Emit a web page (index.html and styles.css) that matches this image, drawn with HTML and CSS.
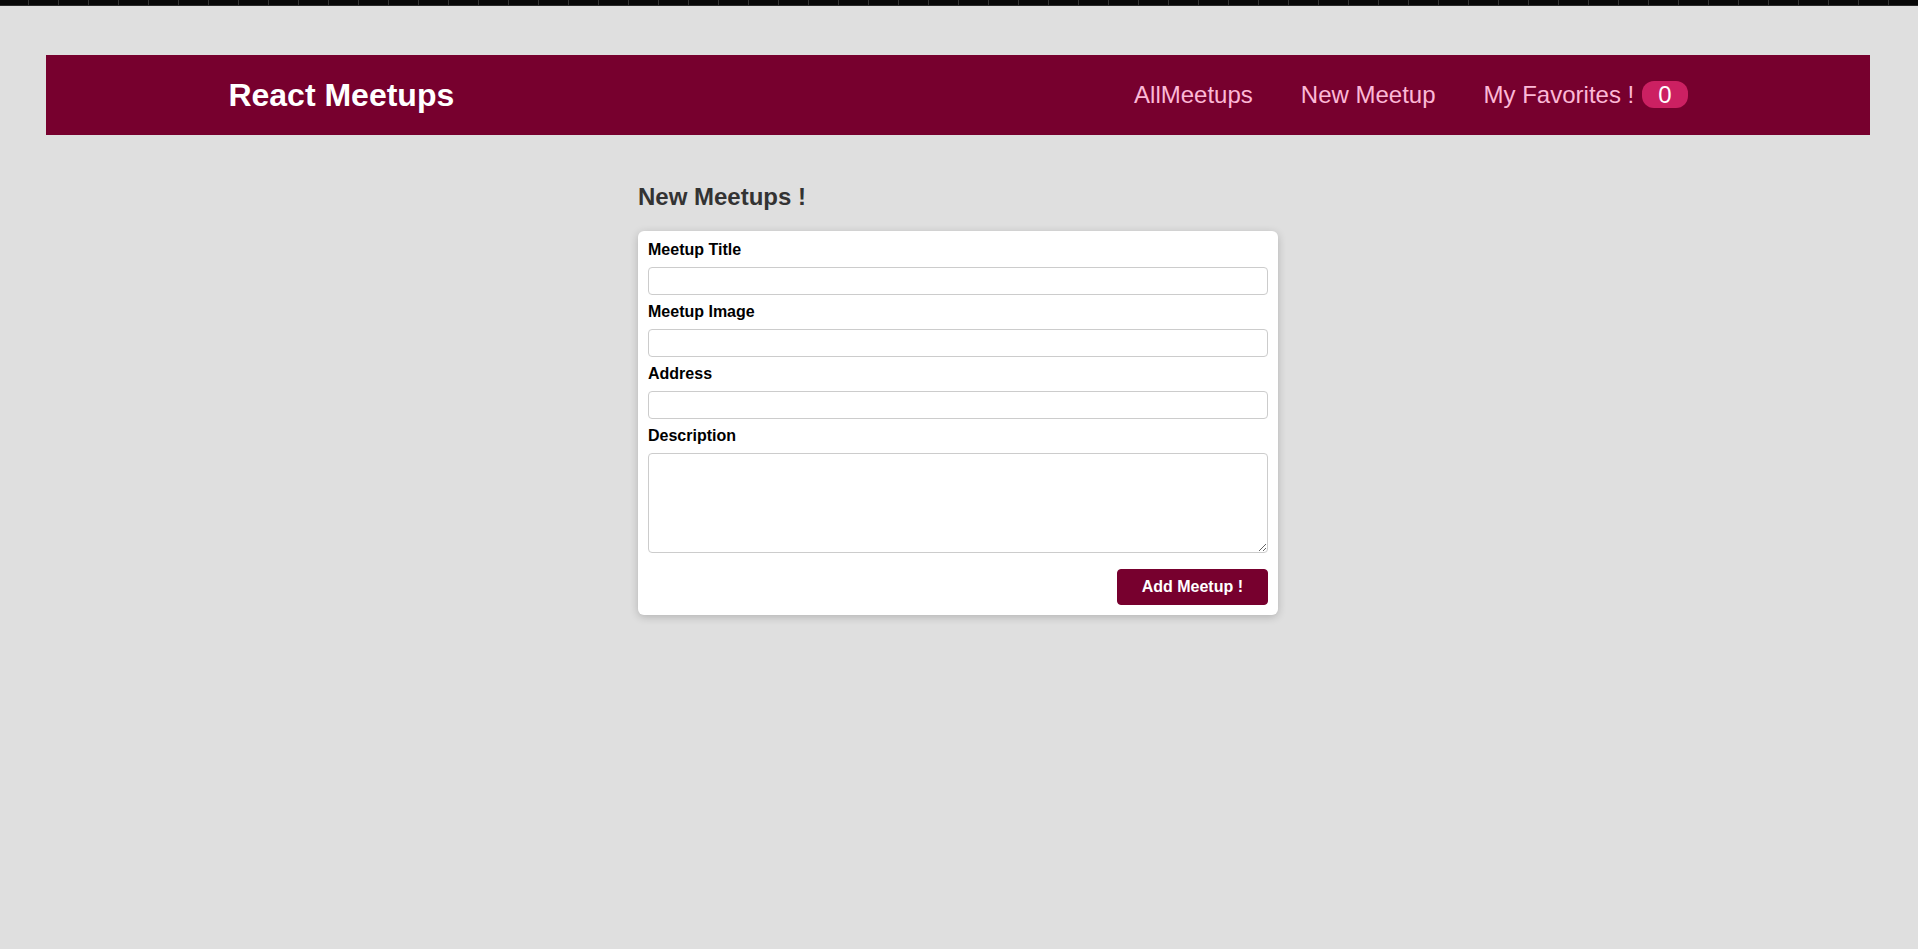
FILE: index.html
```html
<!DOCTYPE html>
<html lang="en">
<head>
<meta charset="utf-8">
<title>React Meetups</title>
<link rel="stylesheet" href="styles.css">
</head>
<body>
<div class="topbar"></div>
<div class="layout">
  <header class="header">
    <div class="logo">React Meetups</div>
    <nav>
      <ul class="nav-list">
        <li><a href="#">AllMeetups</a></li>
        <li><a href="#">New Meetup</a></li>
        <li><a href="#">My Favorites !<span class="badge">0</span></a></li>
      </ul>
    </nav>
  </header>
  <main class="main">
    <section>
      <h2 class="title">New Meetups !</h2>
      <div class="card">
        <form class="form">
          <div class="control">
            <label for="title">Meetup Title</label>
            <input type="text" id="title">
          </div>
          <div class="control">
            <label for="image">Meetup Image</label>
            <input type="url" id="image">
          </div>
          <div class="control">
            <label for="address">Address</label>
            <input type="text" id="address">
          </div>
          <div class="control">
            <label for="description">Description</label>
            <textarea id="description" rows="5"></textarea>
          </div>
          <div class="actions">
            <button type="button">Add Meetup !</button>
          </div>
        </form>
      </div>
    </section>
  </main>
</div>
</body>
</html>
```
FILE: styles.css
```css
* {
  box-sizing: border-box;
}

html, body {
  margin: 0;
  padding: 0;
}

body {
  font-family: "Liberation Sans", Arial, sans-serif;
  font-size: 16px;
  background-color: #dfdfdf;
  min-height: 949px;
}

.topbar {
  height: 6px;
  background:
    linear-gradient(to bottom, transparent 0 5px, #2b2b2b 5px 6px),
    repeating-linear-gradient(to right, #080808 0 28px, #333333 28px 29px, #080808 29px 30px);
}

.layout {
  margin: 0 48px 0 46px;
  padding-top: 49px;
}

.header {
  width: 100%;
  height: 80px;
  display: flex;
  align-items: center;
  justify-content: space-between;
  background-color: #77002e;
  padding: 0 10%;
}

.logo {
  font-size: 32px;
  color: #ffffff;
  font-weight: bold;
}

.nav-list {
  list-style: none;
  margin: 0;
  padding: 0;
  display: flex;
  align-items: baseline;
}

.nav-list li {
  margin-left: 48px;
}

.nav-list a {
  text-decoration: none;
  font-size: 24px;
  color: #fcb8d6;
}

.badge {
  background-color: #cc2062;
  color: #ffffff;
  border-radius: 12px;
  padding: 0 16px;
  margin-left: 8px;
}

.main {
  margin: 48px auto;
  width: 640px;
}

.title {
  font-size: 24px;
  font-weight: bold;
  color: #333333;
  margin: 20px 0;
}

.card {
  background-color: #ffffff;
  border-radius: 6px;
  box-shadow: 0 2px 8px rgba(0, 0, 0, 0.2);
}

.form {
  padding: 10px;
}

.control {
  margin-bottom: 8px;
}

.control label {
  display: block;
  font-weight: bold;
  margin-bottom: 8px;
}

.control input,
.control textarea {
  display: block;
  font: inherit;
  border-radius: 4px;
  border: 1px solid #cccccc;
  padding: 4px;
  width: 100%;
  margin: 0;
}

.actions {
  margin-top: 16px;
  text-align: right;
}

.actions button {
  font: inherit;
  font-weight: bold;
  cursor: pointer;
  background-color: #77002e;
  color: #ffffff;
  padding: 8px 24px;
  border: 1px solid #77002e;
  border-radius: 4px;
}
```
